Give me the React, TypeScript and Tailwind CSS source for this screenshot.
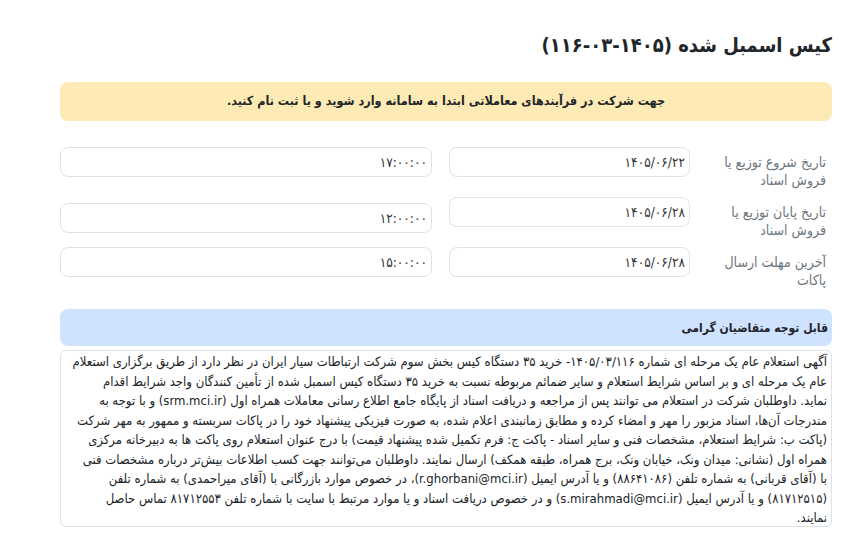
import React from 'react';

const schedule = [
  { label: ['تاریخ شروع توزیع یا', 'فروش اسناد'], date: '۱۴۰۵/۰۶/۲۲', time: '۱۷:۰۰:۰۰', shift: false },
  { label: ['تاریخ پایان توزیع یا', 'فروش اسناد'], date: '۱۴۰۵/۰۶/۲۸', time: '۱۲:۰۰:۰۰', shift: true },
  { label: ['آخرین مهلت ارسال', 'پاکات'], date: '۱۴۰۵/۰۶/۲۸', time: '۱۵:۰۰:۰۰', shift: false },
];

const notice = [
  'آگهی استعلام عام یک مرحله ای شماره ۱۴۰۵/۰۳/۱۱۶- خرید ۳۵ دستگاه کیس بخش سوم شرکت ارتباطات سیار ایران در نظر دارد از طریق برگزاری استعلام',
  'عام یک مرحله ای و بر اساس شرایط استعلام و سایر ضمائم مربوطه نسبت به خرید ۳۵ دستگاه کیس اسمبل شده از تأمین کنندگان واجد شرایط اقدام',
  'نماید. داوطلبان شرکت در استعلام می توانند پس از مراجعه و دریافت اسناد از پایگاه جامع اطلاع رسانی معاملات همراه اول (srm.mci.ir) و با توجه به',
  'مندرجات آن‌ها، اسناد مزبور را مهر و امضاء کرده و مطابق زمانبندی اعلام شده، به صورت فیزیکی پیشنهاد خود را در پاکات سربسته و ممهور به مهر شرکت',
  '(پاکت ب: شرایط استعلام، مشخصات فنی و سایر اسناد - پاکت ج: فرم تکمیل شده پیشنهاد قیمت) با درج عنوان استعلام روی پاکت ها به دبیرخانه مرکزی',
  'همراه اول (نشانی: میدان ونک، خیابان ونک، برج همراه، طبقه همکف) ارسال نمایند. داوطلبان می‌توانند جهت کسب اطلاعات بیش‌تر درباره مشخصات فنی',
  'با (آقای قربانی) به شماره تلفن (۸۸۶۴۱۰۸۶) و یا آدرس ایمیل (r.ghorbani@mci.ir)، در خصوص موارد بازرگانی با (آقای میراحمدی) به شماره تلفن',
  '(۸۱۷۱۲۵۱۵) و یا آدرس ایمیل (s.mirahmadi@mci.ir) و در خصوص دریافت اسناد و یا موارد مرتبط با سایت با شماره تلفن ۸۱۷۱۲۵۵۳ تماس حاصل',
  'نمایند.',
];

function Field({ value, className = '' }: { value: string; className?: string }) {
  return (
    <input
      readOnly
      value={value}
      className={`h-[30px] rounded-lg border border-[#dee2e6] bg-white px-1 text-[13.5px] text-[#333] outline-none ${className}`}
    />
  );
}

export default function App() {
  return (
    <div dir="rtl" className="min-h-screen bg-white pl-[60px] pr-[28px] font-['DejaVu_Sans_Condensed','DejaVu_Sans',sans-serif] text-[#212529]">
      <h1 className="pt-[30px] text-[20px] font-bold leading-[30px]">کیس اسمبل شده (۱۴۰۵-۰۳-۱۱۶)</h1>

      <div className="mt-[22px] flex h-[39px] items-center justify-center rounded-lg bg-[#fdeab4] text-[12.5px] font-bold">
        جهت شرکت در فرآیندهای معاملاتی ابتدا به سامانه وارد شوید و یا ثبت نام کنید.
      </div>

      <div className="mt-[26px]">
        {schedule.map((row, i) => (
          <div key={i} className="flex h-[50px] items-start gap-[12px]">
            <div className="w-[130px] shrink-0 pr-1.5 pt-[6px] text-[14px] leading-[18px] text-[#6c757d]">
              {row.label.map(line => (
                <div key={line}>{line}</div>
              ))}
            </div>
            <Field value={row.date} className="w-[241px] shrink-0" />
            <Field value={row.time} className={`mr-[5px] min-w-0 flex-1 ${row.shift ? 'mt-[6px]' : ''}`} />
          </div>
        ))}
      </div>

      <div className="mt-3 flex h-[37px] items-center rounded-lg bg-[#cfe2ff] pr-1 text-[12px] font-bold">
        قابل توجه متقاضیان گرامی
      </div>

      <div className="mt-1 h-[177px] overflow-hidden rounded-md border border-[#dee2e6] px-1 pt-px text-[13px] leading-[19.5px]">
        {notice.map((line, i) => (
          <div key={i} className="whitespace-nowrap">
            {line}
          </div>
        ))}
      </div>
    </div>
  );
}
